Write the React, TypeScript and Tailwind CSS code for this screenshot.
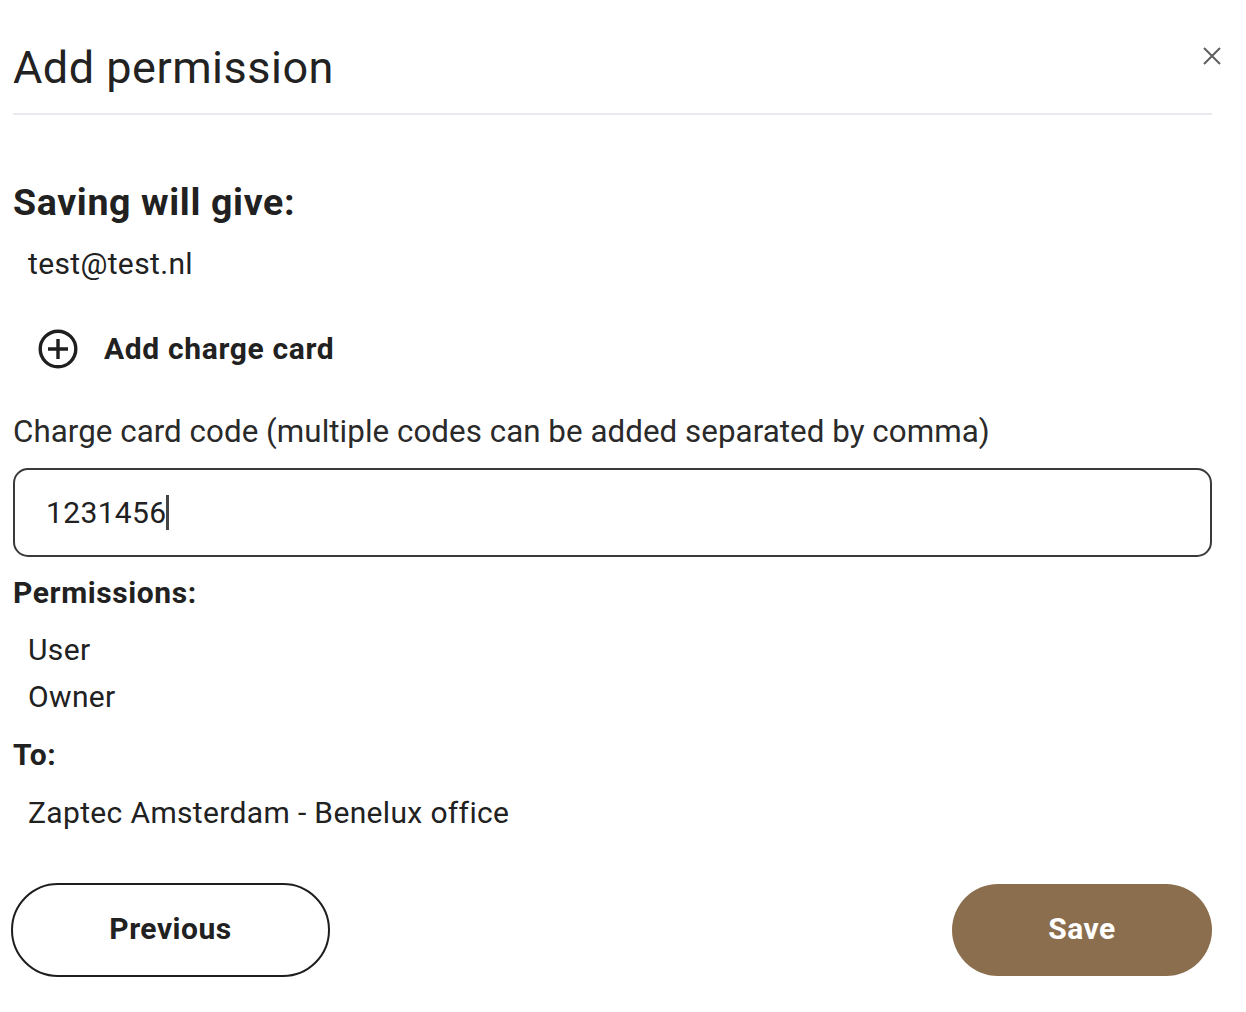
import React from "react";

export default function App() {
  return (
    <div
      className="w-[1246px] h-[1012px] bg-white text-[#212121] overflow-hidden"
      style={{ fontFamily: "Roboto, 'Liberation Sans', sans-serif" }}
    >
      <div className="ml-[13px] w-[1199px] pt-[41px]">
        {/* Header */}
        <div className="flex justify-between items-start">
          <h1 className="text-[45px] leading-[54px] font-normal text-[#222] tracking-[0.5px]">Add permission</h1>
          <button className="-mr-[9px] mt-[6px] w-[18px] h-[18px] flex items-center justify-center">
            <svg width="18" height="18" viewBox="0 0 18 18" fill="none">
              <path d="M1 1L17 17M17 1L1 17" stroke="#5f5f5f" strokeWidth="2" strokeLinecap="butt" />
            </svg>
          </button>
        </div>
        <div className="mt-[18px] h-[2px] bg-[#e9e9ef]" />

        <h2 className="mt-[65px] text-[37.5px] leading-[45px] font-bold tracking-[0.65px]">Saving will give:</h2>
        <div className="mt-[21px] pl-[15px] text-[30px] leading-[36px] tracking-[0.35px]">test@test.nl</div>

        <div className="mt-[47px] flex items-start pl-[25px]">
          <svg width="40" height="40" viewBox="0 0 40 40" fill="none" className="shrink-0">
            <circle cx="20" cy="20" r="17.8" stroke="#1f1f1f" strokeWidth="3.4" />
            <path d="M10 20H30M20 10V30" stroke="#1f1f1f" strokeWidth="3.4" />
          </svg>
          <span className="ml-[26px] mt-[2px] text-[30px] leading-[36px] font-bold tracking-[0.65px]">Add charge card</span>
        </div>

        <div className="mt-[45px] text-[31.3px] leading-[36px] text-[#2a2a2a] tracking-[0.05px]">
          Charge card code (multiple codes can be added separated by comma)
        </div>

        <div className="mt-[18px] h-[89px] border-2 border-[#3a3a3a] rounded-[15px] flex items-center pl-[31px]">
          <span className="text-[30px] leading-[36px] tracking-[0.35px]">1231456</span>
          <span className="ml-[0px] w-[2.5px] h-[35px] bg-[#444]" />
        </div>

        <div className="mt-[18px] text-[30px] leading-[36px] font-bold tracking-[0.6px]">Permissions:</div>
        <div className="mt-[21px] pl-[15px] text-[30px] leading-[36px] tracking-[0.35px]">User</div>
        <div className="mt-[11px] pl-[15px] text-[30px] leading-[36px] tracking-[0.35px]">Owner</div>

        <div className="mt-[22px] text-[30px] leading-[36px] font-bold tracking-[0.6px]">To:</div>
        <div className="mt-[22px] pl-[15px] text-[30px] leading-[36px] tracking-[0.35px]">Zaptec Amsterdam - Benelux office</div>

        <div className="mt-[52px] flex justify-between items-center">
          <button className="-ml-[2px] w-[319px] h-[94px] pb-[3px] rounded-full border-2 border-[#1e1e1e] bg-white text-[30px] font-bold text-[#212121] tracking-[0.5px]">
            Previous
          </button>
          <button className="w-[260px] h-[92px] pb-[3px] rounded-full bg-[#8b6e4e] text-[30px] font-bold text-white tracking-[0.5px]">
            Save
          </button>
        </div>
      </div>
    </div>
  );
}
